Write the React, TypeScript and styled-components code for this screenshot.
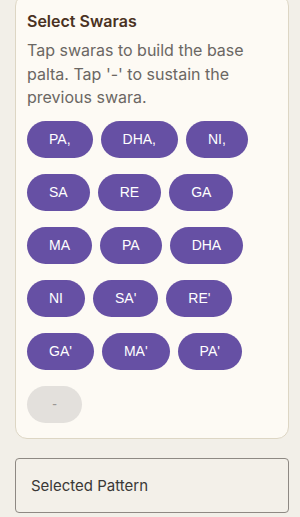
import React from 'react'
import styled, { createGlobalStyle } from 'styled-components'

const GlobalStyle = createGlobalStyle`
  html, body {
    margin: 0;
    padding: 0;
    background: #f2efe8;
    font-family: Inter, "Noto Sans", sans-serif;
  }
`

const Page = styled.div`
  padding: 0 11px 0 15px;
  display: flex;
  flex-direction: column;
  gap: 19px;
`

const Card = styled.div`
  margin-top: -6px;
  background: #fdfaf4;
  border: 1px solid #ddd6c4;
  border-radius: 12px;
  padding: 16px 11px 15px 11px;
`

const Title = styled.h2`
  margin: 0;
  font-size: 16px;
  font-weight: 600;
  color: #4a3122;
  line-height: 20px;
`

const Description = styled.p`
  margin: 8px 0 11px;
  max-width: 228px;
  font-size: 16px;
  line-height: 23.5px;
  color: #6b6763;
`

const Grid = styled.div`
  display: flex;
  flex-direction: column;
  gap: 16px;
`

const Row = styled.div`
  display: flex;
  gap: 8px;
`

const SwaraButton = styled.button<{ $rest?: boolean }>`
  height: 37px;
  padding: 0 ${(p) => (p.$rest ? '23px' : '22px')};
  min-width: ${(p) => (p.$rest ? '55px' : '0')};
  border: none;
  border-radius: 19px;
  background: ${(p) => (p.$rest ? '#e3e0dc' : '#6650a4')};
  color: ${(p) => (p.$rest ? '#9a9794' : '#ffffff')};
  font-family: "Liberation Sans", Arial, sans-serif;
  font-size: 14px;
  cursor: pointer;
`

const PatternBox = styled.div`
  height: 53px;
  border: 1px solid #8e8983;
  border-radius: 4px;
  background: #f3f0e9;
  display: flex;
  align-items: center;
  padding: 0 15px;
  font-size: 15px;
  color: #3a3836;
`

const rows: string[][] = [
  ['PA,', 'DHA,', 'NI,'],
  ['SA', 'RE', 'GA'],
  ['MA', 'PA', 'DHA'],
  ['NI', "SA'", "RE'"],
  ["GA'", "MA'", "PA'"],
]

export default function App() {
  return (
    <>
      <GlobalStyle />
      <Page>
        <Card>
          <Title>Select Swaras</Title>
          <Description>
            Tap swaras to build the base palta. Tap '-' to sustain the previous swara.
          </Description>
          <Grid>
            {rows.map((row, i) => (
              <Row key={i}>
                {row.map((s) => (
                  <SwaraButton key={s}>{s}</SwaraButton>
                ))}
              </Row>
            ))}
            <Row>
              <SwaraButton $rest>-</SwaraButton>
            </Row>
          </Grid>
        </Card>
        <PatternBox>Selected Pattern</PatternBox>
      </Page>
    </>
  )
}
